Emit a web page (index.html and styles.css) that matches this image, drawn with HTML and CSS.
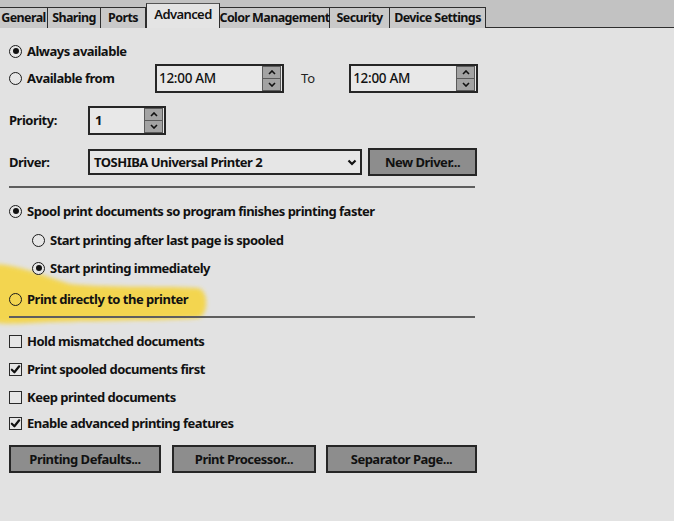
FILE: index.html
```html
<!DOCTYPE html>
<html>
<head>
<meta charset="utf-8">
<link rel="stylesheet" href="styles.css">
</head>
<body>
<div class="page">
  <div class="tabs">
    <div class="tab first">General</div>
    <div class="tab w-sharing">Sharing</div>
    <div class="tab w-ports">Ports</div>
    <div class="tab active">Advanced</div>
    <div class="tab w-color">Color Management</div>
    <div class="tab w-sec">Security</div>
    <div class="tab w-dev">Device Settings</div>
  </div>

  <svg class="marker" viewBox="0 0 674 521" width="674" height="521">
    <defs><filter id="soft" x="-10%" y="-30%" width="120%" height="160%"><feGaussianBlur stdDeviation="2.2"/></filter></defs>
    <path d="M-5 264 C 20 265, 45 276, 70 284 C 110 288, 170 286, 198 288 C 209 290, 209 316, 198 318 C 150 321, 80 320, 30 323 C 10 324, -5 324, -5 322 Z" fill="#f5d43f" filter="url(#soft)"/>
  </svg>

  <div class="content">
    <div class="row r-always">
      <span class="radio on"></span><span class="lbl">Always available</span>
    </div>
    <div class="row r-from">
      <div class="from-left"><span class="radio"></span><span class="lbl">Available from</span></div>
      <div class="spin time">
        <span class="val">12:00 AM</span>
        <span class="arrows"><span class="up"><svg viewBox="0 0 8 5"><path d="M1 4 L4 1 L7 4"/></svg></span><span class="dn"><svg viewBox="0 0 8 5"><path d="M1 1 L4 4 L7 1"/></svg></span></span>
      </div>
      <span class="to">To</span>
      <div class="spin time">
        <span class="val">12:00 AM</span>
        <span class="arrows"><span class="up"><svg viewBox="0 0 8 5"><path d="M1 4 L4 1 L7 4"/></svg></span><span class="dn"><svg viewBox="0 0 8 5"><path d="M1 1 L4 4 L7 1"/></svg></span></span>
      </div>
    </div>
    <div class="row r-prio">
      <span class="lbl fl">Priority:</span>
      <div class="spin prio">
        <span class="val b">1</span>
        <span class="arrows"><span class="up"><svg viewBox="0 0 8 5"><path d="M1 4 L4 1 L7 4"/></svg></span><span class="dn"><svg viewBox="0 0 8 5"><path d="M1 1 L4 4 L7 1"/></svg></span></span>
      </div>
    </div>
    <div class="row r-driver">
      <span class="lbl fl">Driver:</span>
      <div class="select">
        <span class="val b">TOSHIBA Universal Printer 2</span>
        <svg class="chev" viewBox="0 0 10 7"><path d="M1.5 1.5 L5 5 L8.5 1.5"/></svg>
      </div>
      <div class="btn newdrv">New Driver...</div>
    </div>
    <div class="sep s1"></div>
    <div class="row r-spool">
      <span class="radio on"></span><span class="lbl">Spool print documents so program finishes printing faster</span>
    </div>
    <div class="row r-after sub">
      <span class="radio"></span><span class="lbl">Start printing after last page is spooled</span>
    </div>
    <div class="row r-immed sub">
      <span class="radio on"></span><span class="lbl">Start printing immediately</span>
    </div>
    <div class="row r-direct">
      <span class="radio clear"></span><span class="lbl">Print directly to the printer</span>
    </div>
    <div class="sep s2"></div>
    <div class="row r-hold">
      <span class="check"></span><span class="lbl">Hold mismatched documents</span>
    </div>
    <div class="row r-first">
      <span class="check"><svg viewBox="0 0 12 12"><path d="M2 6.2 L4.8 9 L10 2.5"/></svg></span><span class="lbl">Print spooled documents first</span>
    </div>
    <div class="row r-keep">
      <span class="check"></span><span class="lbl">Keep printed documents</span>
    </div>
    <div class="row r-enable">
      <span class="check"><svg viewBox="0 0 12 12"><path d="M2 6.2 L4.8 9 L10 2.5"/></svg></span><span class="lbl">Enable advanced printing features</span>
    </div>
    <div class="row r-btns">
      <div class="btn b1">Printing Defaults...</div>
      <div class="btn b2">Print Processor...</div>
      <div class="btn b3">Separator Page...</div>
    </div>
  </div>
</div>
</body>
</html>
```

FILE: styles.css
```css
* { box-sizing: border-box; }
html, body { margin: 0; padding: 0; }
body {
  width: 674px;
  height: 521px;
  overflow: hidden;
  background: #e2e2e2;
  font-family: "Noto Sans", "Open Sans", sans-serif;
  font-size: 12px;
  color: #111;
}
.page { position: relative; width: 674px; height: 521px; }

.tabs {
  height: 28px;
  background: #c2c2c2;
  border-bottom: 1px solid #2e2e2e;
  display: flex;
  align-items: flex-end;
  margin-left: -8px;
  position: relative;
  z-index: 2;
}
.tab {
  height: 21px;
  margin-bottom: -1px;
  border: 1.5px solid #2e2e2e;
  border-bottom: none;
  border-left: none;
  background: #c9c9c9;
  font-weight: 700;
  font-size: 12.5px;
  letter-spacing: -0.6px;
  white-space: nowrap;
  display: flex;
  align-items: center;
  justify-content: center;
  line-height: 1;
  padding-top: 1px;
}
.tab.first { width: 56px; padding-left: 8px; border-left: none; }
.w-sharing { width: 53px; }
.w-ports { width: 45px; }
.tab.active {
  width: 74px;
  height: 25px;
  background: #e4e4e4;
  border: 1.5px solid #2e2e2e;
  border-bottom: none;
  border-top-color: #555;
  margin-bottom: -1px;
  position: relative;
  z-index: 1;
  align-items: flex-start;
  padding-top: 4px;
  font-weight: 600;
  font-size: 13px;
}
.w-color { width: 110px; }
.w-sec { width: 60px; }
.w-dev { width: 96px; }

.content {
  position: relative;
  z-index: 1;
  padding: 11px 0 0 9px;
  display: flex;
  flex-direction: column;
}
.row { display: flex; align-items: center; height: 24px; }
.lbl { font-weight: 700; letter-spacing: -0.5px; white-space: nowrap; font-size: 13px; }
.fl { width: 79px; }

.radio {
  width: 13px; height: 13px;
  border: 1.6px solid #1a1a1a;
  border-radius: 50%;
  margin-right: 5px;
  flex: none;
  display: flex; align-items: center; justify-content: center;
  background: #e6e6e6;
}
.radio.clear { background: transparent; }
.radio.on::after {
  content: "";
  width: 6px; height: 6px;
  border-radius: 50%;
  background: #111;
}
.check {
  width: 13px; height: 13px;
  border: 1.5px solid #2a2a2a;
  margin-right: 5px;
  flex: none;
  background: #e6e6e6;
  display: flex; align-items: center; justify-content: center;
}
.check svg { width: 11px; height: 11px; }
.check path { fill: none; stroke: #111; stroke-width: 2.4; stroke-linecap: round; stroke-linejoin: round; }

.r-from { height: 30px; }
.from-left { display: flex; align-items: center; width: 146px; }
.spin {
  height: 29px;
  border: 2px solid #262626;
  background: #e8e8e8;
  display: flex;
  align-items: center;
  justify-content: space-between;
  padding: 0 1px 0 2px;
}
.time { width: 129px; }
.val { font-size: 13.5px; letter-spacing: -0.3px; font-weight: 500; }
.val.b { font-weight: 700; letter-spacing: -0.5px; font-size: 13px; }
.arrows { display: flex; flex-direction: column; width: 19px; height: 25px; }
.arrows span {
  flex: 1;
  background: #a3a3a3;
  border: 1px solid #5a5a5a;
  display: flex; align-items: center; justify-content: center;
}
.arrows .dn { border-top: none; }
.arrows svg { width: 8px; height: 5px; }
.arrows path { fill: none; stroke: #111; stroke-width: 1.6; }
.to { margin: 0 34px 0 17px; font-size: 13px; color: #222; }

.r-prio { height: 30px; margin-top: 12px; }
.prio { width: 78px; padding-left: 5px; height: 29px; }

.r-driver { height: 30px; margin-top: 12px; }
.select {
  width: 274px; height: 26px;
  border: 2px solid #262626;
  background: #e6e6e6;
  display: flex; align-items: center; justify-content: space-between;
  padding: 0 3px 0 4px;
}
.chev { width: 10px; height: 7px; }
.chev path { fill: none; stroke: #111; stroke-width: 2.2; }

.btn {
  height: 28px;
  background: #8d8d8d;
  border: 2px solid #262626;
  display: flex; align-items: center; justify-content: center;
  font-weight: 700; font-size: 13px; letter-spacing: -0.5px;
  color: #111;
  white-space: nowrap;
}
.newdrv { width: 109px; margin-left: 6px; height: 28px; }

.sep { width: 466px; height: 2px; background: #5e5e5e; }
.s1 { margin-top: 9px; }
.r-spool { margin-top: 11px; }
.r-after { margin-top: 5px; }
.r-immed { margin-top: 4px; }
.sub { padding-left: 23px; }
.r-direct { margin-top: 7px; }
.s2 { margin-top: 5px; }
.r-hold { margin-top: 11px; }
.r-first { margin-top: 4px; }
.r-keep { margin-top: 4px; }
.r-enable { margin-top: 2px; }
.r-btns { margin-top: 10px; height: 28px; }
.b1 { width: 152px; }
.b2 { width: 144px; margin-left: 11px; }
.b3 { width: 151px; margin-left: 10px; }

.marker {
  position: absolute;
  left: 0; top: 0;
  z-index: 0;
  pointer-events: none;
  opacity: 0.9;
}
```
